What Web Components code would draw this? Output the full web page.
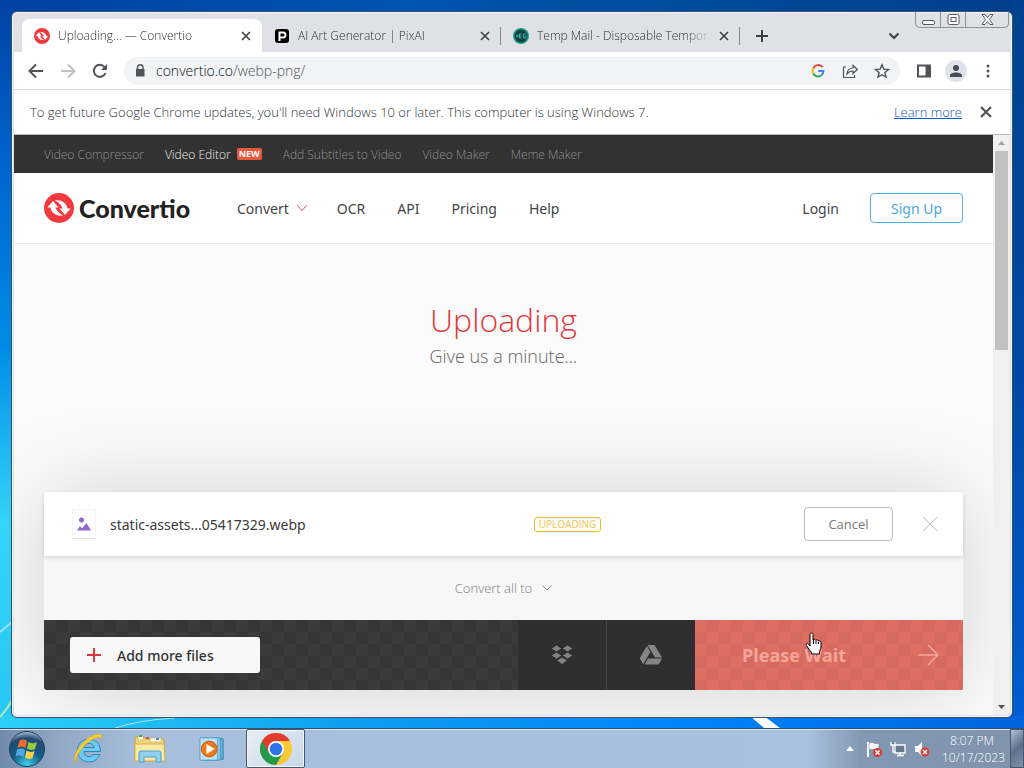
<!DOCTYPE html>
<html lang="en">
<head>
<meta charset="utf-8">
<title>Uploading... — Convertio</title>
<style>
html, body { margin: 0; min-height: 100%; }
body { font-family: "Open Sans", "Noto Sans", sans-serif; font-size: 12px; color: #2f3236; }
</style>
</head>
<body>
<win-desktop>
  <browser-window>
    <tab-strip slot="tabs">
      <browser-tab active>
        <svg slot="icon" width="16" height="16" viewBox="0 0 30 30"><circle cx="15" cy="15" r="15" fill="#f23a3e"/><path d="M3.300 14.500 9 8l5.500 6.500h-3c1.500 4 4 6 7.500 8C13 23.500 7.500 20.500 6.500 14.500zM26.700 15.500 21 22l-5.500-6.500h3c-1.500-4-4-6-7.500-8C17 6.500 22.500 9.500 23.500 15.500z" fill="#fff"/></svg>
        Uploading... — Convertio
      </browser-tab>
      <browser-tab>
        <svg slot="icon" width="16" height="16" viewBox="0 0 16 16"><rect x="1" y="1" width="14" height="14" rx="3" fill="#000"/><path d="M5.500 13V4.500H9a2.500 2.500 0 0 1 0 5H6" fill="none" stroke="#fff" stroke-width="2"/></svg>
        AI Art Generator | PixAI
      </browser-tab>
      <browser-tab>
        <svg slot="icon" width="16" height="16" viewBox="0 0 16 16"><circle cx="8" cy="8" r="8" fill="#16a085"/><circle cx="8" cy="8" r="6.500" fill="#1d3f46"/><path d="M3 8h3M4 6.500v3M8.500 6H6.500v4h2M6.500 8h2M13 6h-2.500v4H13V8.200h-1.200" fill="none" stroke="#2bb59a"/></svg>
        Temp Mail - Disposable Temporary Email
      </browser-tab>
    </tab-strip>
    <nav-toolbar slot="toolbar" host="convertio.co" path="/webp-png/"></nav-toolbar>
    <info-bar slot="info">To get future Google Chrome updates, you'll need Windows 10 or later. This computer is using Windows 7.</info-bar>
    <page-view>
      <promo-bar></promo-bar>
      <site-header></site-header>
      <upload-hero>
        <span slot="title">Uploading</span>
        <span slot="subtitle">Give us a minute...</span>
      </upload-hero>
      <convert-panel>
        <file-row>static-assets...05417329.webp<span slot="status">UPLOADING</span></file-row>
      </convert-panel>
    </page-view>
  </browser-window>
  <task-bar slot="taskbar"></task-bar>
</win-desktop>

<script>
const reset = `:host,*{box-sizing:border-box}button{font:inherit;color:inherit;background:none;border:0;padding:0;margin:0}a{color:inherit;text-decoration:none}svg{display:block;flex:none}`;
const define = (name, html) => {
  const template = document.createElement('template');
  template.innerHTML = html.replace('<style>', '<style>' + reset);
  customElements.define(name, class extends HTMLElement {
    constructor() {
      super();
      this.attachShadow({ mode: 'open' }).append(template.content.cloneNode(true));
    }
    connectedCallback() {
      for (const el of this.shadowRoot.querySelectorAll('[data-attr]')) {
        const value = this.getAttribute(el.dataset.attr);
        if (value !== null) el.textContent = value;
      }
    }
  });
};

define('win-desktop', `<style>
:host{display:grid;grid-template-rows:minmax(0,1fr) 40px;height:100vh;position:relative;overflow:hidden;
 background:linear-gradient(90deg,#2ad0f7 0,#0f9df0 35%,#0087fa 65%,#0064dc 100%) bottom/100% 52px no-repeat,
 linear-gradient(180deg,#0042a2 0,#0065cf 22%,#008ce6 45%,#34d3f8 68%,#25c4f4 100%) left/12px 100% no-repeat,
 linear-gradient(180deg,#00428f 0,#0048a4 50%,#0060d8 100%) right/12px 100% no-repeat,
 linear-gradient(90deg,#0042a2,#0055ad 40%,#003f8c)}
.desk{padding:11px 11px 10px;min-height:0;display:grid;position:relative}
.streak{position:absolute;inset:auto 0 0 0;width:100%;height:150px}
::slotted(browser-window){position:relative}
</style>
<div class="desk"><svg class="streak" viewBox="0 0 1024 150" preserveAspectRatio="none"><path d="M0 54 12 44" stroke="#bff4ff" stroke-width="2" fill="none" opacity=".7"/><path d="M0 139Q8 130 12 122" stroke="#c9f0b0" stroke-width="2" fill="none" opacity=".8"/><path d="M750 138h14l16 12h-16z" fill="#fff"/><path d="M115 150q25-8 60-10" stroke="#a8ecff" fill="none"/></svg><slot></slot></div><slot name="taskbar"></slot>`);

define('browser-window', `<style>
:host{display:flex;flex-direction:column;min-height:0;min-width:0;background:#dfe1e7;border:1px solid #35506f;border-radius:6px;padding:0 2px 2px;box-shadow:inset 0 0 0 1px #f2f5f9;overflow:hidden}
.caption{position:absolute;top:0;right:3px;display:grid;grid-template-columns:25px 25px 42px;border:1px solid #8d9198;border-top:0;border-radius:0 0 5px 5px;height:16px}
.caption button{display:grid;place-items:center;border-right:1px solid #8d9198}.caption button:last-child{border:0}
.caption svg{stroke:#55595f;fill:#fff}
</style>
<div class="caption">
<button aria-label="Minimize"><svg width="13" height="13" viewBox="0 0 13 13"><rect x=".5" y="7.500" width="12" height="4" rx="1.500"/></svg></button>
<button aria-label="Restore"><svg width="13" height="11" viewBox="0 0 13 11"><rect x="1" y=".5" width="11" height="10" rx="1.500"/><rect x="4" y="3.500" width="5" height="4"/></svg></button>
<button aria-label="Close window"><svg width="13" height="11" viewBox="0 0 13 11"><path d="M1 .5h3l2.500 3 2.500-3h3L8.500 5.500l3.500 5H9l-2.500-3-2.500 3H1l3.500-5z"/></svg></button></div>
<slot name="tabs"></slot><slot name="toolbar"></slot><slot name="info"></slot><slot></slot>`);

define('tab-strip', `<style>
:host{display:flex;align-items:flex-end;height:40px;padding-left:8px;flex:none}
.new,.search{display:grid;place-items:center;width:28px;height:33px;margin-left:8px}
.search{margin-left:auto;margin-right:102px}
</style><slot></slot>
<button class="new" aria-label="New tab"><svg width="12" height="12" viewBox="0 0 12 12"><path d="M6 0v12M0 6h12" stroke="#3c4043" stroke-width="2"/></svg></button>
<button class="search" aria-label="Search tabs"><svg width="12" height="8" viewBox="0 0 12 8"><path d="m1.500 1.500 4.500 4.500 4.500-4.500" fill="none" stroke="#3c4043" stroke-width="2"/></svg></button>`);

define('browser-tab', `<style>
:host{display:flex;align-items:center;gap:8px;flex:0 1 239px;min-width:0;height:33px;padding:0 10px 0 12px;position:relative}
:host([active]){background:#fff;border-radius:8px 8px 0 0;flex-basis:240px}
:host(:not([active]))::after{content:"";position:absolute;right:0;top:8px;width:1px;height:18px;background:#85898f}
.t{flex:1;min-width:0;overflow:hidden;white-space:nowrap;font-weight:350;-webkit-mask-image:linear-gradient(90deg,#000 calc(100% - 24px),transparent)}
</style><slot name="icon"></slot><span class="t"><slot></slot></span>
<button aria-label="Close tab"><svg width="12" height="12" viewBox="0 0 12 12"><path d="m2 2 8 8m0-8-8 8" stroke="#3c4043" stroke-width="1.600"/></svg></button>`);

define('nav-toolbar', `<style>
:host{display:flex;align-items:center;height:38px;flex:none;background:#fff;border-bottom:1px solid #d7d9dc;padding:0 14px;gap:16px;color:#505357}
svg{fill:none;stroke:currentColor;stroke-width:2}
.omni{flex:1;display:flex;align-items:center;height:28px;background:#f1f3f4;border-radius:14px;padding:0 10px 0 8px;gap:8px}
.url{flex:1;font-size:14px;font-weight:350;color:#505459}.url b{font-weight:inherit;color:#101214}
.acts,.tools{display:flex;gap:16px;align-items:center}
.tools{gap:13px}
.me{width:22px;height:22px;border-radius:50%;background:#dfe2ea;display:grid;place-items:center}
</style>
<button aria-label="Back"><svg width="16" height="16" viewBox="0 0 16 16"><path d="M15 8H2m6-6.500L1.500 8 8 14.500"/></svg></button>
<button aria-label="Forward" disabled><svg style="color:#c0c2c5" width="16" height="16" viewBox="0 0 16 16"><path d="M1 8h13M8 1.500 14.500 8 8 14.500"/></svg></button>
<button aria-label="Reload"><svg width="16" height="16" viewBox="0 0 16 16"><path d="M13.500 10A6 6 0 1 1 12.500 4"/><path d="M15 1v6H9z" fill="currentColor" stroke="none"/></svg></button>
<div class="omni"><svg width="16" height="16" viewBox="0 0 16 16"><path d="M4 6h8.500v7.500H4z" fill="currentColor" stroke="none"/><path d="M5.500 6V4.500a2.700 2.700 0 0 1 5.400 0V6" stroke-width="1.500"/></svg>
<div class="url"><b data-attr="host"></b><span data-attr="path"></span></div>
<div class="acts">
<svg width="16" height="16" viewBox="0 0 16 16"><path d="M12.500 4.200A5.300 5.300 0 0 0 3.300 5.500" stroke="#ea4335"/><path d="M3.300 5.500a5.500 5.500 0 0 0 0 5" stroke="#fbbc05"/><path d="M3.300 10.500a5.300 5.300 0 0 0 8.200 1.800" stroke="#34a853"/><path d="M11.500 12.300A5.500 5.500 0 0 0 13.400 8H8.200" stroke="#4285f4"/></svg>
<button aria-label="Share"><svg width="16" height="16" viewBox="0 0 16 16" style="stroke-width:1.200"><path d="M4 4H1.500v10.500h11V12M5 11c.3-4 2.500-6 6-6V2.500L15.300 6.500 11 10.500V8c-3 0-4.600 1-6 3z"/></svg></button>
<button aria-label="Bookmark"><svg width="16" height="16" viewBox="0 0 16 16" style="stroke-width:1.400"><path d="m8 1.800 1.800 4.300 4.700.4-3.600 3 1.100 4.600L8 11.700l-4 2.400 1.100-4.600-3.600-3 4.700-.4z"/></svg></button></div></div>
<div class="tools">
<button aria-label="Side panel"><svg width="16" height="16" viewBox="0 0 16 16"><path d="M2 2.500h12v11H2z"/><path d="M9.500 2h5v12h-5z" fill="currentColor" stroke="none"/></svg></button>
<button class="me" aria-label="Profile"><svg width="14" height="14" viewBox="0 0 14 14"><path d="M7 1a3 3 0 1 1 0 6 3 3 0 0 1 0-6zM1 13v-1.500C1 9.500 4 8.500 7 8.500s6 1 6 3V13z" fill="#474b57" stroke="none"/></svg></button>
<button aria-label="Menu"><svg width="16" height="16" viewBox="0 0 16 16" fill="#505357"><g fill="#505357" stroke="none"><circle cx="8" cy="3" r="1.500"/><circle cx="8" cy="8" r="1.500"/><circle cx="8" cy="13" r="1.500"/></g></svg></button></div>`);

define('info-bar', `<style>
:host{display:flex;align-items:center;gap:18px;height:45px;flex:none;background:#fff;border-bottom:1px solid #b9babd;padding:0 18px 0 16px;font-size:13px;font-weight:350}
span{flex:1}a{color:#1558c0;text-decoration:underline}
</style><span><slot></slot></span><a href="#learn">Learn more</a>
<button aria-label="Dismiss"><svg width="12" height="12" viewBox="0 0 12 12"><path d="m1 1 10 10m0-10L1 11" stroke="#4b4e52" stroke-width="2"/></svg></button>`);

define('page-view', `<style>
:host{display:grid;grid-template-columns:minmax(0,1fr) 17px;flex:1;min-height:0;background:#f0f0f0;border-radius:0 0 4px 4px;overflow:hidden}
main{min-height:0;overflow:hidden;background:#fbfbfb;display:flex;flex-direction:column}
.bar{display:flex;flex-direction:column;align-items:center;padding:6px 2px}
.thumb{width:13px;height:35%;background:#c1c1c1;margin-top:6px}
.down{margin-top:auto}
</style><main><slot></slot></main>
<div class="bar"><svg width="7" height="4"><path d="M0 4 3.500 0 7 4z" fill="#a3a3a3"/></svg><div class="thumb"></div><svg class="down" width="7" height="4"><path d="M0 0h7L3.500 4z" fill="#505050"/></svg></div>`);

define('promo-bar', `<style>
:host{display:block;background:#323232;flex:none}
nav{display:flex;align-items:center;gap:21px;height:38px;padding:0 30px;font-size:12px;font-weight:300;color:#919191}
.on{color:#eee;display:flex;align-items:center;gap:6px}
em{font:700 9px/12px "Open Sans",sans-serif;background:#e9573f;color:#fff;padding:0 2px;border-radius:2px}
</style><nav><a href="#c">Video Compressor</a><a class="on" href="#e">Video Editor<em>NEW</em></a><a href="#s">Add Subtitles to Video</a><a href="#m">Video Maker</a><a href="#k">Meme Maker</a></nav>`);

define('site-header', `<style>
:host{display:flex;align-items:center;height:71px;flex:none;background:#fff;border-bottom:1px solid #e6e6e6;padding:0 30px;font-family:"Noto Sans",sans-serif;font-size:14px;color:#444}
.logo{display:flex;align-items:center;gap:5px;font:900 25px/30px Lato,sans-serif;color:#222;width:193px}
nav{display:flex;gap:32px;flex:1}
nav a:first-child{display:flex;align-items:center;gap:8px;margin-right:-2px}
.sign{width:93px;height:30px;border:1px solid #55b0df;border-radius:4px;color:#4aa8da;margin-left:31px}
</style>
<a class="logo" href="#home"><svg width="30" height="30" viewBox="0 0 30 30"><circle cx="15" cy="15" r="15" fill="#f23a3e"/><path d="M3.300 14.500 9 8l5.500 6.500h-3c1.500 4 4 6 7.500 8C13 23.500 7.500 20.500 6.500 14.500zM26.700 15.500 21 22l-5.500-6.500h3c-1.500-4-4-6-7.500-8C17 6.500 22.500 9.500 23.500 15.500z" fill="#fff"/></svg>Convertio</a>
<nav><a href="#convert">Convert <svg width="10" height="6" viewBox="0 0 10 6"><path d="m.5.5 4.500 5 4.500-5" fill="none" stroke="#e8474c"/></svg></a><a href="#ocr">OCR</a><a href="#api">API</a><a href="#pricing">Pricing</a><a href="#help">Help</a></nav>
<a href="#login">Login</a><button class="sign">Sign Up</button>`);

define('upload-hero', `<style>
:host{display:block;flex:none;text-align:center;padding:52px 0 0;height:248px;font-weight:300}
h1{margin:0;font-size:32px;line-height:48px;font-weight:350;color:#e2373f}
p{margin:0;font-size:18px;line-height:24px;color:#666}
</style><h1><slot name="title"></slot></h1><p><slot name="subtitle"></slot></p>`);

define('convert-panel', `<style>
:host{display:block;flex:none;margin:0 30px;background:#f7f7f7;border-radius:3px;box-shadow:0 0 90px rgba(0,0,0,.17);position:relative}
.all{display:flex;align-items:center;justify-content:center;gap:10px;height:64px;width:100%;font-size:13px;font-weight:350;color:#7c7c7c}
.foot{display:grid;grid-template-columns:minmax(0,1fr) 88px 89px 268px;height:70px;border-radius:0 0 3px 3px;overflow:hidden;background:#3b3b3b}
.foot>*{display:flex;align-items:center}
.add{padding-left:26px;--sq:#00000016}
.add,.go{background-image:repeating-conic-gradient(var(--sq) 0 25%,transparent 0 50%);background-size:24px 24px}
.add button{display:flex;align-items:center;gap:15px;width:190px;height:36px;padding-left:16px;background:#f8f8f8;border-radius:3px;font:500 14px "Noto Sans",sans-serif;color:#333}
.cloud{justify-content:center;background:#2f2f2f}.cloud+.cloud{border-left:1px solid #464646}
.go{--sq:#0000000a;position:relative;background-color:#df6e62;color:#f3a69b;font-size:18px;font-weight:700;justify-content:space-between;padding:0 24px 0 47px}
.hand{position:absolute;left:110px;top:12px}
</style><slot></slot>
<button class="all">Convert all to <svg width="10" height="6" viewBox="0 0 10 6"><path d="m.5.5 4.500 4.500 4.500-4.500" fill="none" stroke="#888"/></svg></button>
<div class="foot"><div class="add"><button><svg width="16" height="16"><path d="M8 1v14M1 8h14" stroke="#e2333c" stroke-width="2"/></svg>Add more files</button></div>
<button class="cloud" aria-label="Dropbox"><svg width="24" height="22" viewBox="0 0 24 22" fill="#828282"><path d="M6.500 1 12 4.500 6.500 8 1 4.500zM17.500 1 23 4.500 17.500 8 12 4.500zM6.500 8l5.500 3.500L6.500 15 1 11.500zM17.500 8l5.500 3.500-5.500 3.500-5.500-3.500zM12 13l5.500 3.500L12 20.500l-5.500-4z" stroke="#2f2f2f"/></svg></button>
<button class="cloud" aria-label="Google Drive"><svg width="24" height="22" viewBox="0 0 24 22" fill="#858585"><path d="M8.500 1h7L23 13.500h-7zM7.800 2 11.300 8 4.200 20.500.7 14.300zM9 14.500h14L19.700 20.500H5.600z"/></svg></button>
<button class="go">Please Wait<svg width="22" height="22" viewBox="0 0 22 22"><path d="M1 11h19M11 1l10 10-10 10" fill="none" stroke="#f3a69b" stroke-width="1.500"/></svg>
<svg class="hand" width="18" height="24" viewBox="0 0 18 24"><path d="M5 14V2.500C5 .5 8 .5 8 2.500V8c.5-1 2.500-.8 2.800.5.700-1 2.500-.7 2.700.7.800-.8 2.500-.3 2.500 1.300V15c0 2-1.500 3.500-1.500 5.500V22h-8v-1.500C5 18.500 3 16 1.500 13.500 0 11.500 2.500 10.500 3.500 12z" fill="#fff" stroke="#000"/><path d="M8.500 8v4M11 9v3M13.500 10v2" stroke="#000"/></svg></button></div>`);

define('file-row', `<style>
:host{display:grid;grid-template-columns:24px minmax(0,438fr) 67px minmax(0,203fr) 89px 44px;align-items:center;height:64px;padding:0 26px 0 28px;background:#fff;border-radius:3px 3px 0 0;box-shadow:0 2px 4px rgba(0,0,0,.13);position:relative;color:#3a3a3a;font-size:14px}
.pic{width:24px;height:30px;border:1px solid #f5f3f5;border-bottom-color:#e4e2e6;display:grid;place-items:center}
.name{padding-left:14px;font-family:"Noto Sans",sans-serif}
.st{border:1px solid #e9b93a;border-radius:3px;color:#edc45a;font-size:10px;line-height:13px;text-align:center;background:#fffdf3}
.cancel{grid-column:5;height:34px;border:1px solid #bbb;border-radius:4px;font-size:13px;color:#777}
.x{justify-self:end}
</style><div class="pic"><svg width="14" height="14" viewBox="0 0 14 14" fill="#9067d0"><circle cx="4.500" cy="3" r="2.500"/><path d="M0 13.500 3 9l2 2.500L9.500 6l4.500 7.500z"/></svg></div><span class="name"><slot></slot></span><span class="st"><slot name="status"></slot></span><button class="cancel">Cancel</button><button class="x" aria-label="Remove file"><svg width="14" height="14"><path d="m0 0 14 14M14 0 0 14" stroke="#bcbcbc"/></svg></button>`);

define('task-bar', `<style>
:host{display:flex;align-items:center;position:relative;border-top:1px solid #34506c;box-shadow:inset 0 1px #d5e5f3;background:linear-gradient(90deg,#7089ac 0,#93a9c6 6%,#a7bfdc 14%,#a8c1de 79%,#8398b3 84%,#7f93ab);color:#fff}
.apps{display:flex;height:100%;align-items:center}
.apps button{display:grid;place-items:center;width:62px;height:100%}
.apps .start{width:57px;padding-right:4px}
.apps .cur{width:59px;margin-left:3px;border:1px solid #45576e;border-radius:2px;box-shadow:inset 0 0 0 1px #f3f8fd;background:linear-gradient(135deg,#e8eef6,#c8d7e9)}
.tray{margin-left:auto;display:flex;align-items:center;gap:8px;height:100%}
.clock{font-size:12px;font-weight:350;line-height:17px;text-align:center;width:60px;margin-left:4px;white-space:nowrap}
.peek{width:14px;height:100%;border:1px solid #46566b;background:linear-gradient(135deg,#b4c3d4,#5b708a 50%,#7f93aa)}
</style>
<div class="apps">
<button class="start" aria-label="Start"><svg width="38" height="38" viewBox="0 0 38 38"><defs><radialGradient id="o" cx=".5" cy=".95" r=".95"><stop offset="0" stop-color="#41d4f0"/><stop offset=".45" stop-color="#145b86"/><stop offset=".8" stop-color="#244a70"/><stop offset="1" stop-color="#a9bfd2"/></radialGradient></defs><circle cx="19" cy="19" r="17.500" fill="url(#o)" stroke="#20405f"/><path d="M11.500 10.500q4-2 7.500.5L17.500 18q-4-2.500-8 0z" fill="#ee6b2f"/><path d="M20.500 12q4 2.500 8.500 0l-2 7q-4 2-8-.5z" fill="#9bcb3c"/><path d="M9 19.500q4.500-2 8 .5L15.500 27q-4-2.500-8-.5z" fill="#51a7e8"/><path d="M18.500 20.500q4 2.500 8 .5l-2 7q-4 2-7.500-.5z" fill="#fcd044"/></svg></button>
<button aria-label="Internet Explorer"><svg width="32" height="32" viewBox="0 0 32 32"><path d="M28.500 18.500H12c.3 6 7 6.500 9 3h6.800C24 33 5.500 31 5.500 17 5.500 3 29 2 28.500 18.500zM12 14.500H22c-.7-5.500-9.300-5.500-10 0z" fill="#6cc9f0" stroke="#2a86b8"/><path d="M4 29.500C-2 23 13 2 27 1c4 0 3 3 2 5-.5-2-2-2.200-4-1.500C16 7 3.500 20 4 29.500z" fill="#f4cf3b" stroke="#d5a51a" stroke-width=".6"/></svg></button>
<button aria-label="Windows Explorer"><svg width="34" height="30" viewBox="0 0 34 30"><path d="M2 3h9l2 2h18v22H2z" fill="#efd57a" stroke="#c8a23e"/><path d="M5 2h5v4H5zM17 4h11v4H17z" fill="#fffbe0" stroke="#bda85b" stroke-width=".6"/><path d="M6 1h3v2H6z" fill="#47a34d"/><path d="M13 3h3v2h-3z" fill="#d2523c"/><path d="M23 4h3v2h-3z" fill="#458dc7"/><path d="M2 10h29l1 17H2z" fill="#fae9a0" stroke="#d4b152"/><path d="M6 28V19q0-2 2-2h18q2 0 2 2v9h-5v-5H11v5z" fill="#8ed1ee" stroke="#4da0c9"/></svg></button>
<button aria-label="Media Player"><svg width="28" height="26" viewBox="0 0 30 28"><path d="M8 3h19v22H8z" fill="#69b4dc" stroke="#347fae"/><path d="M5 2h19v24H5z" fill="#91cfeb" stroke="#4390bd"/><path d="M2 2h19v24H2z" fill="#bce2f3" stroke="#569ec5"/><circle cx="12" cy="14" r="8.500" fill="#ef7918" stroke="#c8590d"/><path d="M9 8.500v11l9-5.500z" fill="#fff"/></svg></button>
<button class="cur" aria-label="Google Chrome"><svg width="32" height="32" viewBox="0 0 32 32"><circle cx="16" cy="16" r="16" fill="#fcc934"/><path d="M2.140 8A16 16 0 0 0 16 32L22.930 20 16 16z" fill="#229a4a"/><path d="M2.140 8A16 16 0 0 1 29.860 8H16L9.070 20z" fill="#e33b2e"/><circle cx="16" cy="16" r="8" fill="#fff"/><circle cx="16" cy="16" r="6.300" fill="#2f75e5"/></svg></button></div>
<div class="tray"><svg width="8" height="5" style="margin-right:4px"><path d="M0 5 4 0l4 5z" fill="#fff"/></svg>
<svg width="16" height="16" viewBox="0 0 16 16"><path d="M2 1v15" stroke="#fff" stroke-width="2"/><path d="M3 2q3-1.500 5 0t5 0v7q-3 1.500-5 0t-5 0z" fill="#fff" stroke="#56677c" stroke-width=".5"/><circle cx="11.500" cy="11.500" r="4.500" fill="#d53a34"/><path d="m9.500 9.500 4 4m0-4-4 4" stroke="#fff" stroke-width="1.500"/></svg>
<svg width="16" height="16" viewBox="0 0 16 16"><path d="M5 4h10v8H5zM7 14.500h7M10 12v2M1 1v3h4V1M3 4v7h2" fill="#65788f" stroke="#fff" stroke-width="1.300"/></svg>
<svg width="16" height="16" viewBox="0 0 16 16"><path d="M1 5h3l4-4v14l-4-4H1z" fill="#fff"/><circle cx="11" cy="11" r="4.500" fill="#d53a34"/><path d="m9 9 4 4m0-4-4 4" stroke="#fff" stroke-width="1.500"/></svg>
<div class="clock">8:07 PM<br>10/17/2023</div><button class="peek" aria-label="Show desktop"></button></div>`);
</script>
</body>
</html>
